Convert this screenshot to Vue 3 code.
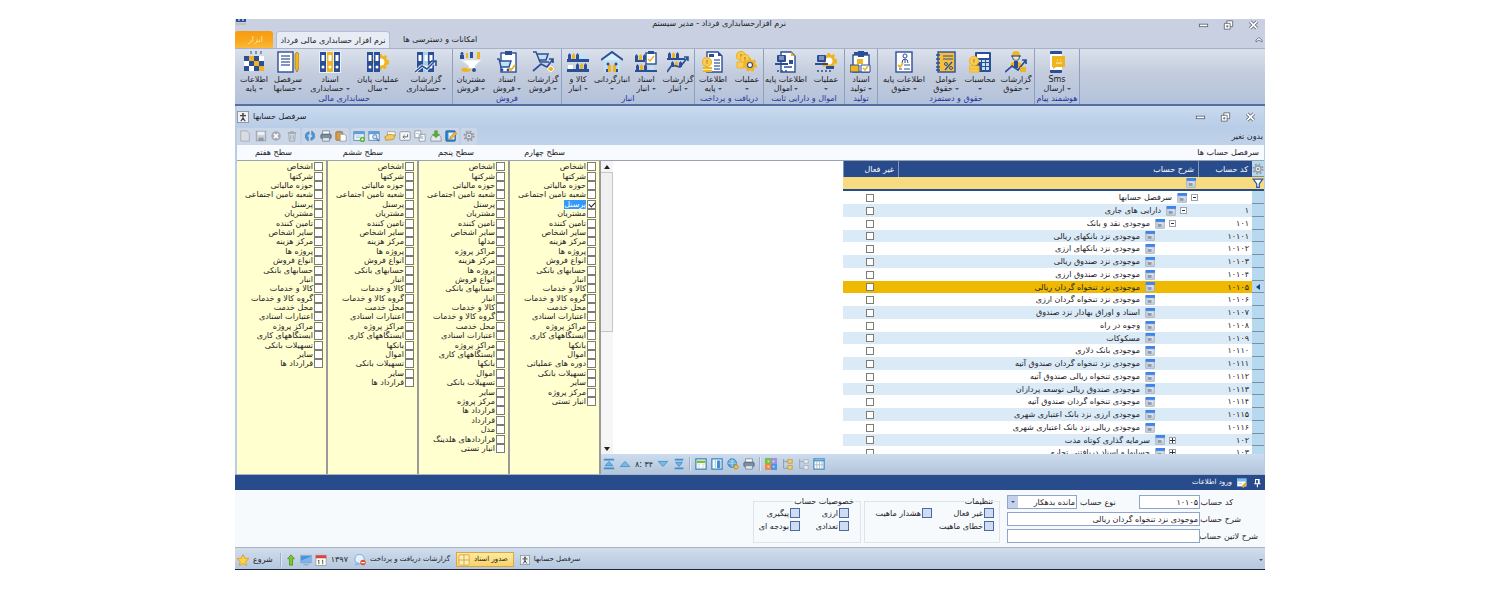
<script setup>
import { ref } from 'vue'

const B = '#2b4f96'
const Y = '#f0b41e'
const L = '#bfe0f5'

const gear = (x, y, r, fill, hole) =>
  `<circle cx="${x}" cy="${y}" r="${r}" fill="${hole}" stroke="${fill}" stroke-width="3"/><circle cx="${x}" cy="${y}" r="${r + 2}" fill="none" stroke="${fill}" stroke-width="2" stroke-dasharray="2.6 2.6"/>`
const coin = (x, y) =>
  `<ellipse cx="${x}" cy="${y}" rx="4.5" ry="4.5" fill="#f6cd5c" stroke="${Y}" stroke-width="1.2"/><path d="M${x} ${y - 2}v4M${x - 1} ${y - 1}h2" stroke="#c98a10" stroke-width="1"/>`
const binder = (x, c, w = 6) =>
  `<rect x="${x}" y="1" width="${w}" height="20" fill="${c}"/><rect x="${x + 1.5}" y="4" width="${w - 3}" height="6" fill="#fff"/><circle cx="${x + w / 2}" cy="16" r="1.5" fill="#fff"/>`
const bottles = (x, y) =>
  `<path d="M${x} ${y}v-4l1.5-2 1.5 2v4z" fill="${B}"/><path d="M${x + 4} ${y}v-4l1.5-2 1.5 2v4z" fill="${Y}"/><path d="M${x + 8} ${y}v-4l1.5-2 1.5 2v4z" fill="${B}"/>`
const sheet = (x, y, w, h) =>
  `<rect x="${x}" y="${y}" width="${w}" height="${h}" fill="#fff" stroke="${B}" stroke-width="1.4"/>`
const lines = (x, y, w, n) =>
  Array.from({ length: n }, (_, i) => `<path d="M${x} ${y + i * 3}h${w}" stroke="${B}" stroke-width="1.2"/>`).join('')
const cart = (x, y) =>
  `<path d="M${x} ${y}h2l2 8h8l2-6h-11" fill="${L}" stroke="${B}" stroke-width="1.4"/><circle cx="${x + 5}" cy="${y + 11}" r="1.4" fill="${B}"/><circle cx="${x + 11}" cy="${y + 11}" r="1.4" fill="${B}"/>`

const art = {
  blocks: `<path d="M1 5h5v5h-5zM6 10h5v5h-5zM1 15h5v5h-5zM11 15h5v5h-5zM16 10h5v5h-5zM11 5h5v5h-5z" fill="${B}"/><path d="M6 5h5v5h-5zM11 10h5v5h-5zM16 15h5v5h-5z" fill="${Y}"/><path d="M6 15h5v5h-5zM16 5h5v5h-5zM1 10h5v5h-5z" fill="#fff"/><path d="M8 0v3M13 0v3M18 0v3" stroke="${B}"/>`,
  note: sheet(1, 1, 15, 20) + lines(4, 5, 9, 4) + `<path d="M18 3l2-2 2 2v14l-2 4-2-4z" fill="${Y}" stroke="#8a6a20" stroke-width=".6"/>`,
  binders: `<rect x="0" y="0" width="22" height="22" fill="#e8f2fb"/>` + binder(1, B) + binder(8, Y) + binder(15, B),
  bindersGear: gear(14, 11, 5, Y, '#fff') + binder(0, B) + binder(7, B),
  bindersChart: binder(2, B) + binder(8, '#a9cdec') + binder(13, B) + `<path d="M0 21l7-6 5 3 8-8" fill="none" stroke="#fff" stroke-width="3"/><path d="M0 21l7-6 5 3 8-8M16 10h5v5" fill="none" stroke="${B}" stroke-width="1.6"/>`,
  funnel: `<path d="M1 9h20l-6 6v5l-6-2v-3z" fill="#fff" stroke="#dce6f0"/><path d="M0 8v-4h4v4zM10 7v-6h3v6z" fill="${B}"/><path d="M6 7v-5h2v5zM17 8v-7h3v7z" fill="${Y}"/><circle cx="2" cy="2.500" r="1.500" fill="${B}"/><path d="M1 18q4-3 7 0l4-1q-1 4-6 4t-5-3z" fill="${Y}"/><circle cx="14" cy="19" r="2" fill="${B}"/>`,
  clipCart: sheet(5, 2, 15, 19) + `<rect x="9" y="0" width="7" height="4" fill="${B}"/>` + cart(1, 8) + `<path d="M13 17l2 2 4-5" stroke="${Y}" stroke-width="2" fill="none"/>`,
  cartChart: `<path d="M1 1h3l4 10h9M5 3h11l-2 6h-7" fill="${L}" stroke="${B}" stroke-width="1.500"/><path d="M1 20l8-7 6 3 6-8M17 8h4v4" fill="none" stroke="${B}" stroke-width="1.700"/><path d="M15 18l4-3 3 3-3 3z" fill="${Y}" stroke="#fff"/>`,
  shelf: bottles(1, 8) + `<path d="M0 8h22v3h-22zM0 18h22v3h-22z" fill="${B}"/><path d="M13 3h7v5h-7z" fill="${L}"/><path d="M1 14h5v4h-5z" fill="#fff"/>` + bottles(9, 18),
  warehouse: `<path d="M3 8v13h3v-10h10v10h3v-13z" fill="${L}"/><path d="M0 9l11-8 11 8" fill="#d8effa" stroke="${B}" stroke-width="2"/><path d="M7 14h3v7h-3zM12 14h3v7h-3z" fill="${Y}"/><circle cx="7" cy="13" r="1.500" fill="${B}"/><circle cx="15" cy="13" r="1.500" fill="${B}"/><path d="M5 21v-3h2v3zM15 21v-3h2v3z" fill="${B}"/>`,
  shelfClip: sheet(11, 2, 10, 11) + `<rect x="13" y="0" width="6" height="3" fill="${B}"/><path d="M13 8l2 2 4-5" stroke="${Y}" stroke-width="1.500" fill="none"/>` + bottles(0, 9) + `<path d="M0 9h10v2h-10zM0 19h22v2h-22z" fill="${B}"/>` + bottles(1, 19) + `<path d="M14 15h5v4h-5z" fill="${L}"/>`,
  shelfChart: bottles(1, 7) + `<path d="M0 7h18v2h-18z" fill="${B}"/>` + bottles(4, 16) + `<path d="M0 21l5-7 8 2 8-10M17 6h4v4" fill="none" stroke="${B}" stroke-width="1.600"/>`,
  coinsPaper: `<path d="M5 1h11l4 4v16h-15z" fill="#fff" stroke="${B}" stroke-width="1.400"/><path d="M16 1v4h4z" fill="${B}"/><rect x="7" y="3" width="5" height="3" fill="${B}"/>` + lines(12, 9, 6, 4) + coin(5, 11) + `<path d="M1 16h9v5h-9z" fill="${Y}"/><path d="M1 18.500h9" stroke="#fff3c0"/>`,
  coinsGear: coin(5, 5) + coin(9, 8) + `<path d="M1 11h7v6h-7z" fill="#f6cd5c" stroke="${Y}"/>` + gear(14, 14, 4, Y, '#fff') + `<circle cx="14" cy="14" r="2.500" fill="#fff" stroke="${B}" stroke-width="1.200"/>`,
  assetPaper: `<path d="M6 1h10l4 4v16h-14z" fill="#fff" stroke="${B}" stroke-width="1.400"/><path d="M16 1v4h4z" fill="${Y}"/>` + `<rect x="2" y="4" width="9" height="7" rx="1" fill="${B}"/><path d="M0 12h13v2h-13z" fill="${B}"/><rect x="14" y="9" width="4" height="4" fill="${B}"/><path d="M2 20h2M6 20h2M10 20h2M9 16h8" stroke="${B}" stroke-width="1.500"/><path d="M4 6h5M4 8h5" stroke="#fff" stroke-width=".8"/>`,
  assetGear: gear(14, 10, 5, Y, '#fff') + `<rect x="2" y="4" width="9" height="7" rx="1" fill="${B}"/><path d="M0 12h13v2h-13z" fill="${B}"/><path d="M4 6h5M4 8h5" stroke="#fff" stroke-width=".8"/><rect x="11" y="15" width="8" height="3" fill="${B}"/><path d="M2 20h2M6 20h2M10 20h2M14 20h2" stroke="${B}" stroke-width="1.500"/>`,
  production: sheet(3, 4, 16, 17) + `<rect x="4" y="1" width="14" height="3" fill="${B}"/><rect x="8" y="0" width="6" height="6" fill="${B}"/><rect x="7" y="8" width="6" height="5" fill="${Y}"/><path d="M0 14h9v7h-9z" fill="${Y}" stroke="${B}"/><path d="M11 14h9v7h-9z" fill="#fff" stroke="${B}"/><path d="M13 17l2 2 3-4" stroke="${Y}" stroke-width="1.500" fill="none"/>`,
  personPaper: sheet(3, 1, 16, 20) + `<circle cx="12" cy="5" r="2" fill="#fff" stroke="${B}"/><path d="M9 12q0-4 3-4t3 4M12 8v4" fill="none" stroke="${B}"/><path d="M5 14l2 2 3-4" fill="none" stroke="${Y}" stroke-width="1.800"/><path d="M11 14h6M11 18h6M6 18h3" stroke="${B}"/>`,
  percentBook: `<rect x="3" y="1" width="17" height="20" fill="#f5bf3c" stroke="${B}" stroke-width="1.400"/><path d="M1 4h4M1 8h4M1 12h4M1 16h4M1 19h4" stroke="${B}" stroke-width="1.500"/><path d="M8 5h10M8 8h10" stroke="${B}"/><path d="M10 19l7-8" stroke="${B}" stroke-width="1.400"/><circle cx="11" cy="13" r="1.500" fill="none" stroke="${B}"/><circle cx="16" cy="17" r="1.500" fill="none" stroke="${B}"/>`,
  calculator: `<rect x="6" y="1" width="16" height="20" rx="1" fill="${B}"/><rect x="8" y="3" width="12" height="4" fill="#fff"/><path d="M9 9h3v2h-3zM13 9h3v2h-3zM17 9h3v2h-3zM13 12h3v3h-3zM17 12h3v3h-3zM13 16h3v3h-3zM17 16h3v3h-3z" fill="${L}"/>` + coin(5, 10) + `<path d="M0 15h10v6h-10z" fill="#f6cd5c" stroke="${Y}"/><path d="M0 18h10" stroke="${Y}"/>`,
  worker: `<circle cx="11" cy="6" r="3.500" fill="#fbe3b8" stroke="${B}"/><path d="M7 5q0-5 4-5t4 5z" fill="${Y}"/><path d="M6 5h10" stroke="${B}" stroke-width="1.200"/><path d="M5 17v-4q1-3 6-3t6 3v4z" fill="${Y}" stroke="#fff" stroke-width=".5"/><path d="M9 10h4v7h-4z" fill="${B}"/><path d="M0 21l7-6 6 4 8-10M17 9h4v4" fill="none" stroke="${B}" stroke-width="1.700"/><path d="M15 16h6v5h-6z" fill="${Y}"/>`,
  sms: `<rect x="4" y="0" width="12" height="22" rx="1" fill="${B}"/><rect x="4" y="3" width="12" height="16" fill="#fff"/><path d="M6 5h13v11h-9l-3 2v-2h-1z" fill="${Y}"/><path d="M10 12h6M11 9h1M14 9h1" stroke="#fff2c0" stroke-width="1.200"/>`
}

const groups = [
  { name: 'حسابداری مالی', items: [
    { icon: 'blocks', a: 'اطلاعات', b: 'پایه', w: 'w-m' },
    { icon: 'note', a: 'سرفصل', b: 'حسابها', w: 'w-s' },
    { icon: 'binders', a: 'اسناد', b: 'حسابداری', w: 'w-xl' },
    { icon: 'bindersGear', a: 'عملیات پایان', b: 'سال', w: 'w-l' },
    { icon: 'bindersChart', a: 'گزارشات', b: 'حسابداری', w: 'w-xl' }
  ] },
  { name: 'فروش', items: [
    { icon: 'funnel', a: 'مشتریان', b: 'فروش', w: 'w-m' },
    { icon: 'clipCart', a: 'اسناد', b: 'فروش', w: 'w-m' },
    { icon: 'cartChart', a: 'گزارشات', b: 'فروش', w: 'w-m' }
  ] },
  { name: 'انبار', items: [
    { icon: 'shelf', a: 'کالا و', b: 'انبار', w: 'w-s' },
    { icon: 'warehouse', a: 'انبارگردانی', b: '', w: 'w-m' },
    { icon: 'shelfClip', a: 'اسناد', b: 'انبار', w: 'w-s' },
    { icon: 'shelfChart', a: 'گزارشات', b: 'انبار', w: 'w-s' }
  ] },
  { name: 'دریافت و پرداخت', items: [
    { icon: 'coinsPaper', a: 'اطلاعات', b: 'پایه', w: 'w-m' },
    { icon: 'coinsGear', a: 'عملیات', b: '', w: 'w-s' }
  ] },
  { name: 'اموال و دارایی ثابت', items: [
    { icon: 'assetPaper', a: 'اطلاعات پایه', b: 'اموال', w: 'w-l' },
    { icon: 'assetGear', a: 'عملیات', b: '', w: 'w-m' }
  ] },
  { name: 'تولید', items: [{ icon: 'production', a: 'اسناد', b: 'تولید', w: 'w-s' }] },
  { name: 'حقوق و دستمزد', items: [
    { icon: 'personPaper', a: 'اطلاعات پایه', b: 'حقوق', w: 'w-xl' },
    { icon: 'percentBook', a: 'عوامل', b: 'حقوق', w: 'w-s' },
    { icon: 'calculator', a: 'محاسبات', b: '', w: 'w-m' },
    { icon: 'worker', a: 'گزارشات', b: 'حقوق', w: 'w-m' }
  ] },
  { name: 'هوشمند پیام', items: [{ icon: 'sms', a: 'Sms', b: 'ارسال', w: 'w-l' }] }
]

const small = {
  page: '<path d="M2 1h7l3 3v9H2z" fill="#d9dde2" stroke="#a3abb5"/>',
  save: '<rect x="1.500" y="1.500" width="11" height="11" fill="#c9ced5" stroke="#959da8"/><path d="M3 2h8v4H3z" fill="#eef0f3"/><path d="M4 9h6v4H4z" fill="#8f98a4"/>',
  cancel: '<circle cx="7" cy="7" r="5.500" fill="#a3a9b2"/><path d="M4.500 4.500l5 5M9.500 4.500l-5 5" stroke="#fff" stroke-width="1.800"/>',
  trash: '<path d="M3 4h8l-1 9H4zM2 3h10M5 2h4" fill="#d3d8df" stroke="#9aa2ad"/><path d="M5.500 6v5M8.500 6v5" stroke="#9aa2ad"/>',
  refresh: '<path d="M6 2Q0 3 2 10L5 13V8L4 9Q3 5 6 5z" fill="#4a9ad4" stroke="#2a74b4" stroke-width=".6"/><path d="M8 12Q14 11 12 4L9 1V6L10 5Q11 9 8 9z" fill="#4a9ad4" stroke="#2a74b4" stroke-width=".6"/>',
  print: '<path d="M3 1h8v4H3z" fill="#fff" stroke="#7c8795"/><rect x="1" y="5" width="12" height="5" rx="1" fill="#7d8ea2" stroke="#566473"/><path d="M3 9h8v4H3z" fill="#dfeaf5" stroke="#7c8795"/>',
  paste: '<rect x="1" y="2" width="8" height="10" rx="1" fill="#d99b45" stroke="#a87024"/><rect x="3" y="1" width="4" height="2" fill="#8a8f98"/><path d="M6 5h5l2 2v6H6z" fill="#fff" stroke="#8f99a5"/>',
  addForm: '<rect x="1" y="2" width="12" height="10" fill="#fff" stroke="#4c7fb5"/><path d="M1 2h12v3H1z" fill="#5fa0dc"/><path d="M3 7h7M3 9h5" stroke="#8fb4d8"/><circle cx="11" cy="11" r="3" fill="#5cb531"/><path d="M9.500 11h3M11 9.500v3" stroke="#fff"/>',
  findForm: '<rect x="1" y="2" width="12" height="10" fill="#fff" stroke="#4c7fb5"/><path d="M1 2h12v3H1z" fill="#5fa0dc"/><circle cx="8" cy="8" r="2.500" fill="#d5eafc" stroke="#3e6fa8"/><path d="M10 10l3 3" stroke="#3e6fa8" stroke-width="1.500"/>',
  openFile: '<path d="M4 2h9v5H4z" fill="#fff" stroke="#9b9b9b"/><path d="M1 8l5-3 7 1-2 5-9 1z" fill="#f2cb63" stroke="#bd9330"/>',
  enter: '<rect x="1" y="2" width="12" height="10" rx="1" fill="#f3f5f8" stroke="#8a94a0"/><path d="M10 5v3H5M6.500 6L4.500 8l2 2" fill="none" stroke="#4f5a68"/>',
  copy: '<path d="M1 1h7v8H1zM6 5h7v8H6z" fill="#fff" stroke="#8a94a0"/><path d="M2.500 4h3M8 8h3M8 10h3" stroke="#8fb0d4"/>',
  download: '<path d="M1 9l2-3h8l2 3v4H1z" fill="#e3e6ea" stroke="#8a94a0"/><path d="M5.500 1h3v4H11L7 9 3 5h2.500z" fill="#55b22c" stroke="#3a8a1a" stroke-width=".6"/>',
  editBook: '<rect x="1" y="1" width="11" height="12" rx="1" fill="#2f86d0" stroke="#1d5f9c"/><path d="M4 3h7v8H4z" fill="#e9f3fc"/><path d="M5 11l1-3 6-6 2 2-6 6z" fill="#f0b63a" stroke="#a8761a" stroke-width=".6"/>',
  gear: '<circle cx="7" cy="7" r="3.500" fill="#eceef0" stroke="#9299a2" stroke-width="1.500"/><circle cx="7" cy="7" r="5.500" fill="none" stroke="#9299a2" stroke-width="2" stroke-dasharray="2.160 2.160"/><circle cx="7" cy="7" r="1.500" fill="#9299a2"/>',
  person: '<rect x=".5" y=".5" width="13" height="13" fill="#f0f1f3" stroke="#8b8f96"/><circle cx="7" cy="3.500" r="1.300" fill="#44474c"/><path d="M3.500 5.500h7M7 5v4M7 8l-2.500 4M7 8l2.500 4" stroke="#44474c" stroke-width="1.400" fill="none"/>',
  last: '<path d="M1 2h12M1 12h12" stroke="#3f8fc9" stroke-width="2"/><path d="M7 4l4.500 5h-9z" fill="#6db3e2" stroke="#3f8fc9"/>',
  prev: '<path d="M7 4l5.500 6h-11z" fill="#79b9e4" stroke="#4492ca"/>',
  next: '<path d="M7 10L1.500 4h11z" fill="#79b9e4" stroke="#4492ca"/>',
  first: '<path d="M2 2h10M2 12h10" stroke="#3f8fc9" stroke-width="2"/><path d="M7 10L3 5h8z" fill="#6db3e2" stroke="#3f8fc9"/>',
  gridGreen: '<rect x="1" y="1" width="12" height="12" fill="#fff" stroke="#3f87bd" stroke-width="1.500"/><path d="M2 3h10v3H2z" fill="#7dbb45"/><path d="M3 8h3M8 8h3M3 10.500h3M8 10.500h3" stroke="#b5c4d3"/>',
  columns: '<rect x="1" y="1" width="12" height="12" fill="#fff" stroke="#3f87bd" stroke-width="1.500"/><path d="M5 2v10M9 2v10" stroke="#9db8d0"/><path d="M7 3h4v9H7z" fill="#3f91d4"/>',
  globe: '<circle cx="6" cy="6" r="5" fill="#59a6dc" stroke="#2d77ae"/><path d="M1 6h10M6 1v10M2.500 3q3.500 2 7 0" stroke="#d5ebf9" fill="none" stroke-width=".8"/><circle cx="10.500" cy="10.500" r="2.500" fill="#f1c04d" stroke="#b88822"/>',
  tiles: '<rect x="0" y="0" width="7" height="7" fill="#7fbf3f"/><rect x="7" y="0" width="7" height="7" fill="#a38fe0"/><rect x="0" y="7" width="7" height="7" fill="#f08a4a"/><rect x="7" y="7" width="7" height="7" fill="#4e94e0"/><path d="M3 3h2v2H3zM9 3h2v2H9zM3 9h2v2H3zM9 9h2v2H9z" fill="#fff" opacity=".7"/>',
  tree: '<path d="M3 1v11h5M3 4h5" fill="none" stroke="#8b94a0"/><rect x="8" y="2" width="5" height="4" fill="#f2d27a" stroke="#bf9a3a"/><rect x="8" y="9" width="5" height="4" fill="#f2d27a" stroke="#bf9a3a"/>',
  treeOff: '<path d="M3 1v11h5M3 4h5" fill="none" stroke="#9aa3ae"/><rect x="8" y="2" width="5" height="4" fill="#eceff3" stroke="#a9b1bb"/><rect x="8" y="9" width="5" height="4" fill="#eceff3" stroke="#a9b1bb"/>',
  table: '<rect x="1" y="1" width="12" height="12" fill="#fff" stroke="#4d8fc2" stroke-width="1.500"/><path d="M1 2h12v2H1z" fill="#4d9bd8"/><path d="M4.500 4v9M7.500 4v9M10.500 4v9M1 8h12" stroke="#a6b4c2"/>',
  doc: '<rect x="1" y="1" width="12" height="12" fill="#c6cfda" stroke="#9eabba"/><path d="M1 0h13v4H1z" fill="#3f84ea"/><path d="M4 7h5v4H4z" fill="#8f9cad"/><path d="M5 6h6v3" fill="none" stroke="#eef2f6"/>',
  funnelSmall: '<path d="M1.500 2.500h11L8.500 8v4h-3V8z" fill="#fff" stroke="#2c5ba2" stroke-width="1.500"/>',
  form: '<rect x="0" y="1" width="13" height="11" fill="#fff" stroke="#5d94c7"/><path d="M0 1h13v4H0z" fill="#79c0ee"/><path d="M2 8h5" stroke="#9ab"/><path d="M6 12l6-6 2 2-5 6z" fill="#f0a02e"/>',
  pin: '<path d="M5 2h5v6H5zM3 8h9M7.500 8v5M9 2v6" fill="none" stroke="#fff" stroke-width="1.500"/>',
  star: '<path d="M7 .5l2 4.500 4.800.5-3.600 3.200 1 4.800L7 11l-4.200 2.500 1-4.800L.2 5.500 5 5z" fill="#ffd447" stroke="#e09b1d"/>',
  up: '<path d="M7 1l4 4.500H8.800V13H5.200V5.500H3z" fill="#7cc62f" stroke="#4d9a15"/>',
  monitor: '<rect x=".5" y="1.500" width="13" height="9" fill="#4b93dd" stroke="#9fb4c9"/><path d="M1 8l12-5v7H1z" fill="#7ab6ee"/><path d="M4 12.500h6" stroke="#9aa6b3" stroke-width="1.500"/>',
  calendar: '<rect x="1" y="1.500" width="12" height="12" fill="#fff" stroke="#9a9fa6"/><path d="M1 1.500h12V5H1z" fill="#d9443c"/><path d="M4.500 7v5M9 7v5M3.500 8l1-1M8 8l1-1" stroke="#444"/>',
  chat: '<circle cx="6.500" cy="6" r="5.500" fill="#e4f2fd" stroke="#6aa4da"/><path d="M3 10l-1 3 4-2z" fill="#e4f2fd" stroke="#6aa4da"/><circle cx="10.500" cy="10" r="3.200" fill="#e2512f"/><path d="M8.500 10h4" stroke="#fff" stroke-width="1.400"/>',
  orgGrid: '<rect x="0" y="0" width="14" height="14" fill="#fff0bd"/><path d="M1 1h12v12H1zM7 1v12M1 7h12" fill="none" stroke="#d29b28"/><path d="M4 7v0M10 7v0" stroke="#d29b28" stroke-width="2"/>'
}

const tools = [
  { cls: 'tg-a', icons: [['page', 'جدید'], ['save', 'ذخیره'], ['cancel', 'انصراف'], ['trash', 'حذف']] },
  { cls: 'tg-b', icons: [['refresh', 'بازخوانی'], ['print', 'چاپ'], ['paste', 'چسباندن']] },
  { cls: 'tg-c', icons: [['addForm', 'افزودن'], ['findForm', 'جستجو'], ['openFile', 'باز کردن'], ['enter', 'ورود'], ['copy', 'کپی'], ['download', 'دریافت'], ['editBook', 'ویرایش']] },
  { cls: 'tg-d', icons: [['gear', 'تنظیمات']] }
]

const head = ['اشخاص', 'شرکتها', 'حوزه مالیاتی', 'شعبه تامین اجتماعی', 'پرسنل', 'مشتریان', 'تامین کننده', 'سایر اشخاص']
const mid = ['مرکز هزینه', 'پروژه ها', 'انواع فروش', 'حسابهای بانکی', 'انبار', 'کالا و خدمات', 'گروه کالا و خدمات', 'محل خدمت', 'اعتبارات اسنادی', 'مراکز پروژه', 'ایستگاههای کاری']
const build = (key, names) => names.map((name, i) => ({ id: key + i, name, on: false }))
const levels = ref([
  { name: 'سطح هفتم', items: build('g', [...head, ...mid, 'تسهیلات بانکی', 'سایر', 'قرارداد ها']) },
  { name: 'سطح ششم', items: build('f', [...head, ...mid, 'بانکها', 'اموال', 'تسهیلات بانکی', 'سایر', 'قرارداد ها']) },
  { name: 'سطح پنجم', items: build('e', [...head, 'مدلها', 'مراکز پروژه', ...mid, 'بانکها', 'اموال', 'تسهیلات بانکی', 'سایر', 'مرکز پروژه', 'قرارداد ها', 'قرارداد', 'مدل', 'قراردادهای هلدینگ', 'انبار تستی']) },
  { name: 'سطح چهارم', items: build('d', [...head, ...mid, 'بانکها', 'اموال', 'دوره های عملیاتی', 'تسهیلات بانکی', 'سایر', 'مرکز پروژه', 'انبار تستی']) }
])
levels.value[3].items[4].on = true

const rows = ref([
  ['', 'سرفصل حسابها', 0, '−'],
  ['۱', 'دارایی های جاری', 1, '−'],
  ['۱۰۱', 'موجودی نقد و بانک', 2, '−'],
  ['۱۰۱۰۱', 'موجودی نزد بانکهای ریالی', 3],
  ['۱۰۱۰۲', 'موجودی نزد بانکهای ارزی', 3],
  ['۱۰۱۰۳', 'موجودی نزد صندوق ریالی', 3],
  ['۱۰۱۰۴', 'موجودی نزد صندوق ارزی', 3],
  ['۱۰۱۰۵', 'موجودی نزد تنخواه گردان ریالی', 3],
  ['۱۰۱۰۶', 'موجودی نزد تنخواه گردان ارزی', 3],
  ['۱۰۱۰۷', 'اسناد و اوراق بهادار نزد صندوق', 3],
  ['۱۰۱۰۸', 'وجوه در راه', 3],
  ['۱۰۱۰۹', 'مسکوکات', 3],
  ['۱۰۱۱۰', 'موجودی بانک دلاری', 3],
  ['۱۰۱۱۱', 'موجودی نزد تنخواه گردان صندوق آتیه', 3],
  ['۱۰۱۱۲', 'موجودی تنخواه ریالی صندوق آتیه', 3],
  ['۱۰۱۱۳', 'موجودی صندوق ریالی توسعه پردازان', 3],
  ['۱۰۱۱۴', 'موجودی تنخواه گردان صندوق آتیه', 3],
  ['۱۰۱۱۵', 'موجودی ارزی نزد بانک اعتباری شهری', 3],
  ['۱۰۱۱۶', 'موجودی ریالی نزد بانک اعتباری شهری', 3],
  ['۱۰۲', 'سرمایه گذاری کوتاه مدت', 2, '+'],
  ['۱۰۳', 'حسابها و اسناد دریافتنی تجاری', 2, '+']
].map(([code, name, depth, sign]) => ({ code, name, depth, sign, off: false })))
const selected = ref(7)

const code = ref('۱۰۱۰۵')
const title = ref('موجودی نزد تنخواه گردان ریالی')
const latin = ref('')
const kind = ref('مانده بدهکار')
const settings = ['غیر فعال', 'هشدار ماهیت', 'خطای ماهیت']
const traits = ['ارزی', 'پیگیری', 'تعدادی', 'بودجه ای']
</script>

<template>
  <div class="desk">
    <main class="window">
      <header class="caption">
        <svg class="app-mark" viewBox="0 0 12 6"><path d="M1 0h10v3H1z" fill="#2b4f96" /><path d="M3 1h2M7 1h2" stroke="#fff" /><path d="M1 5h10" stroke="#c9a98a" /></svg>
        <h1 dir="rtl">نرم افزارحسابداری فرداد - مدیر سیستم</h1>
        <div class="controls">
          <button aria-label="کوچک کردن"><svg viewBox="0 0 12 12"><rect x="1" y="5" width="10" height="3" fill="#fff" stroke="#5b6270" /></svg></button>
          <button aria-label="بازگرداندن"><svg viewBox="0 0 12 12"><path d="M4 1h7v7H4z" fill="#fff" stroke="#5b6270" /><path d="M1 4h7v7H1z" fill="#fff" stroke="#5b6270" /><path d="M3 7.500h3M4.500 6v3" stroke="#5b6270" /></svg></button>
          <button aria-label="بستن"><svg viewBox="0 0 12 12"><path d="M2 2l8 8M10 2l-8 8" stroke="#5b6270" stroke-width="4" /><path d="M2 2l8 8M10 2l-8 8" stroke="#fff" stroke-width="2" /></svg></button>
        </div>
      </header>

      <nav class="tabs">
        <button class="tab tab-tools">ابزار</button>
        <button class="tab tab-on">نرم افزار حسابداری مالی فرداد</button>
        <button class="tab">امکانات و دسترسی ها</button>
        <button class="collapse" aria-label="جمع کردن نوار"><svg viewBox="0 0 8 6"><path d="M1 5V3l3-2.500L7 3v2L4 3z" fill="#fff" stroke="#5b6270" stroke-width=".8" /></svg></button>
      </nav>

      <section class="ribbon">
        <div v-for="g in groups" :key="g.name" class="group">
          <div class="group-items">
            <button v-for="it in g.items" :key="it.icon" class="big" :class="it.w">
              <svg viewBox="0 0 22 22" v-html="art[it.icon]"></svg>
              <span>{{ it.a }}</span>
              <span class="second"><span v-if="it.b">{{ it.b }}</span><i class="caret"></i></span>
            </button>
          </div>
          <h2>{{ g.name }}</h2>
        </div>
      </section>

      <section class="child">
        <header class="child-cap">
          <svg class="s12" viewBox="0 0 14 14" v-html="small.person"></svg>
          <h2>سرفصل حسابها</h2>
          <div class="controls">
            <button aria-label="کوچک کردن"><svg viewBox="0 0 12 12"><rect x="1" y="5" width="10" height="3" fill="#fff" stroke="#5b6270" /></svg></button>
            <button aria-label="بازگرداندن"><svg viewBox="0 0 12 12"><path d="M4 1h7v7H4z" fill="#fff" stroke="#5b6270" /><path d="M1 4h7v7H1z" fill="#fff" stroke="#5b6270" /><path d="M3 7.500h3M4.500 6v3" stroke="#5b6270" /></svg></button>
            <button aria-label="بستن"><svg viewBox="0 0 12 12"><path d="M2 2l8 8M10 2l-8 8" stroke="#5b6270" stroke-width="4" /><path d="M2 2l8 8M10 2l-8 8" stroke="#fff" stroke-width="2" /></svg></button>
          </div>
        </header>

        <div class="toolbar">
          <div v-for="t in tools" :key="t.cls" class="tool-group" :class="t.cls">
            <button v-for="[name, label] in t.icons" :key="name" :aria-label="label"><svg class="s12" viewBox="0 0 14 14" v-html="small[name]"></svg></button>
          </div>
          <span class="state">بدون تغیر</span>
        </div>

        <div class="level-heads">
          <h3 v-for="l in levels" :key="l.name" class="level-head">{{ l.name }}</h3>
          <h3 class="accounts-head">سرفصل حساب ها</h3>
        </div>

        <div class="body">
          <ul v-for="l in levels" :key="l.name" class="level" dir="rtl">
            <li v-for="it in l.items" :key="it.id">
              <label :class="{ picked: it.on }"><input v-model="it.on" type="checkbox" class="box"><span>{{ it.name }}</span></label>
            </li>
          </ul>

          <div class="side">
            <div class="grid-area">
              <div class="scroll">
                <button aria-label="بالا"><svg viewBox="0 0 6 4"><path d="M3 0l3 4H0z" fill="#222" /></svg></button>
                <span class="thumb"></span>
                <span class="track"></span>
                <button aria-label="پایین"><svg viewBox="0 0 6 4"><path d="M3 4L0 0h6z" fill="#222" /></svg></button>
              </div>
              <div class="table-clip">
                <table dir="rtl">
                  <colgroup><col class="c-mark"><col class="c-code"><col><col class="c-off"></colgroup>
                  <thead>
                    <tr>
                      <th class="mark"><svg class="s12" viewBox="0 0 14 14" v-html="small.gear"></svg></th>
                      <th>کد حساب</th>
                      <th>شرح حساب</th>
                      <th>غیر فعال</th>
                    </tr>
                    <tr class="filter">
                      <td class="mark"><svg class="s12" viewBox="0 0 14 14" v-html="small.funnelSmall"></svg></td>
                      <td></td>
                      <td class="filter-cell"><svg class="s10" viewBox="0 0 14 14" v-html="small.doc"></svg></td>
                      <td></td>
                    </tr>
                  </thead>
                  <tbody>
                    <tr v-for="(r, i) in rows" :key="r.code" :class="{ chosen: i === selected }" @click="selected = i">
                      <td class="mark"><i v-if="i === selected" class="pointer"></i></td>
                      <td class="code">{{ r.code }}</td>
                      <td>
                        <div class="node" :class="'d' + r.depth">
                          <button v-if="r.sign" class="sign" :aria-label="r.name"><svg viewBox="0 0 5 5"><path :d="r.sign === '+' ? 'M0 2.500h5M2.500 0v5' : 'M1 2.500h3'" stroke="#333" /></svg></button>
                          <svg class="s10" viewBox="0 0 14 14" v-html="small.doc"></svg>
                          <span>{{ r.name }}</span>
                        </div>
                      </td>
                      <td class="off"><input v-model="r.off" type="checkbox" class="box tiny" :aria-label="'غیر فعال ' + r.name"></td>
                    </tr>
                  </tbody>
                </table>
              </div>
            </div>

            <div class="navigator">
              <button aria-label="ابتدا"><svg class="s12" viewBox="0 0 14 14" v-html="small.last"></svg></button>
              <button aria-label="قبلی"><svg class="s12" viewBox="0 0 14 14" v-html="small.prev"></svg></button>
              <output>۸: ۳۴</output>
              <button aria-label="بعدی"><svg class="s12" viewBox="0 0 14 14" v-html="small.next"></svg></button>
              <button aria-label="انتها"><svg class="s12" viewBox="0 0 14 14" v-html="small.first"></svg></button>
              <i class="bar"></i>
              <button v-for="n in ['gridGreen', 'columns', 'globe', 'print']" :key="n" :aria-label="n"><svg class="s12" viewBox="0 0 14 14" v-html="small[n]"></svg></button>
              <i class="bar"></i>
              <button v-for="n in ['tiles', 'tree', 'treeOff', 'table']" :key="n" :aria-label="n"><svg class="s12" viewBox="0 0 14 14" v-html="small[n]"></svg></button>
            </div>
          </div>
        </div>
      </section>

      <section class="entry" dir="rtl">
        <header class="entry-cap">
          <svg class="s10" viewBox="0 0 14 14" v-html="small.pin"></svg>
          <svg class="s10" viewBox="0 0 14 14" v-html="small.form"></svg>
          <h2>ورود اطلاعات</h2>
        </header>
        <form class="form" @submit.prevent>
          <div class="fields">
            <label for="code" class="l1">کد حساب</label>
            <div class="pair">
              <input id="code" v-model="code" type="text">
              <label for="kind">نوع حساب</label>
              <div class="combo">
                <select id="kind" v-model="kind"><option>مانده بدهکار</option><option>مانده بستانکار</option></select>
                <span class="drop"><i class="caret"></i></span>
              </div>
            </div>
            <label for="title" class="l2">شرح حساب</label>
            <input id="title" v-model="title" type="text">
            <label for="latin">شرح لاتین حساب</label>
            <input id="latin" v-model="latin" type="text">
          </div>
          <fieldset class="set-wide">
            <legend>تنظیمات</legend>
            <label v-for="s in settings" :key="s"><input type="checkbox" class="box blue"><span>{{ s }}</span></label>
          </fieldset>
          <fieldset class="set-narrow">
            <legend>خصوصیات حساب</legend>
            <label v-for="s in traits" :key="s"><input type="checkbox" class="box blue"><span>{{ s }}</span></label>
          </fieldset>
        </form>
      </section>

      <footer class="status">
        <button class="start"><svg class="s12" viewBox="0 0 14 14" v-html="small.star"></svg>شروع</button>
        <i class="bar"></i>
        <button aria-label="بالا"><svg class="s12" viewBox="0 0 14 14" v-html="small.up"></svg></button>
        <button aria-label="نمایش"><svg class="s12" viewBox="0 0 14 14" v-html="small.monitor"></svg></button>
        <button><svg class="s12" viewBox="0 0 14 14" v-html="small.calendar"></svg>۱۳۹۷</button>
        <button class="task"><svg class="s12" viewBox="0 0 14 14" v-html="small.chat"></svg>گزارشات دریافت و پرداخت</button>
        <button class="task hot"><svg class="s12" viewBox="0 0 14 14" v-html="small.orgGrid"></svg>صدور اسناد</button>
        <button class="task"><svg class="s10" viewBox="0 0 14 14" v-html="small.person"></svg>سرفصل حسابها</button>
        <i class="more caret"></i>
      </footer>
    </main>
  </div>
</template>

<style>
body {
  margin: 0;
  background: #fff;
}
</style>

<style scoped>
* {
  box-sizing: border-box;
}
.desk {
  padding: 19px 235px 20px;
}
.window,
.window button,
.window input,
.window select {
  font-family: "DejaVu Sans", "Noto Sans", sans-serif;
  font-size: 8px;
  color: #1c2028;
}
.window {
  background: #c9d0e1;
  line-height: 9px;
}
h1,
h2,
h3 {
  margin: 0;
  font-size: 8px;
  font-weight: 400;
}
button {
  padding: 0;
  border: 0;
  background: none;
  line-height: 9px;
  white-space: nowrap;
}
svg {
  display: block;
}
.s12 {
  width: 12px;
  height: 12px;
}
.s10 {
  width: 10px;
  height: 10px;
}
.caret {
  border: 2px solid transparent;
  border-top-color: #4a5160;
  border-bottom-width: 0;
}
.bar {
  width: 1px;
  height: 14px;
  background: #9fb1c9;
  border-right: 1px solid #dde7f3;
  box-sizing: content-box;
}

.caption {
  display: grid;
  grid-template-columns: 80px 1fr 80px;
  height: 12px;
}
.app-mark {
  width: 12px;
  height: 6px;
}
.caption h1 {
  text-align: center;
  padding-right: 62px;
}
.controls {
  display: flex;
  justify-content: flex-end;
  gap: 14px;
  padding-right: 6px;
}
.controls svg {
  width: 11px;
  height: 10px;
}

.tabs {
  display: flex;
  height: 17px;
}
.tab {
  padding: 0 13px;
  border-radius: 3px 3px 0 0;
}
.tab-tools {
  width: 38px;
  margin-right: 3px;
  background: linear-gradient(#f89a12, #f8a91e 60%, #fbb93a);
}
.tab.tab-tools {
  color: #ffe39a;
}
.tab-on {
  width: 114px;
  padding: 0;
  border: 1px solid #b4bfd3;
  border-bottom: 0;
  background: #e8ecf4;
}
.collapse {
  margin-left: auto;
  padding: 0 2px 0;
}
.collapse svg {
  width: 8px;
  height: 6px;
}

.ribbon {
  display: flex;
  height: 58px;
  padding-left: 1px;
  border-top: 1px solid #a7b2c7;
  border-bottom: 2px solid #566f9f;
  background: linear-gradient(#dbe1ec, #c3ccdd 45%, #b3c2db);
}
.group {
  border-right: 1px solid #8fa0be;
  display: flex;
  flex-direction: column;
}
.group-items {
  display: flex;
}
.group h2 {
  text-align: center;
  color: #23309a;
  line-height: 12px;
  white-space: nowrap;
}
.big {
  display: flex;
  flex-direction: column;
  align-items: center;
  height: 44px;
  padding-top: 2px;
  line-height: 9px;
}
.big svg {
  width: 22px;
  height: 22px;
  margin-bottom: 2px;
}
.second {
  display: flex;
  align-items: center;
  gap: 2px;
  height: 9px;
}
.w-s { width: 32px; }
.w-m { width: 36px; }
.w-l { width: 44px; }
.w-xl { width: 52px; }

.child {
  padding: 0 1px 0 2px;
  background: #b9cce5;
}
.child-cap {
  display: flex;
  align-items: center;
  gap: 4px;
  height: 21px;
  background: linear-gradient(#c9daef, #b9cde7);
}
.child-cap .controls {
  margin-left: auto;
  padding-right: 8px;
}
.toolbar {
  display: flex;
  align-items: center;
  gap: 2px;
  height: 18px;
  background: linear-gradient(#b9cde7, #c0d2e9);
}
.tool-group {
  display: flex;
  justify-content: space-between;
  align-items: center;
  height: 17px;
  padding: 0 2px;
  border-radius: 2px;
  background: #cbd7e6;
}
.tg-a { width: 63px; }
.tg-b { width: 47px; }
.tg-c { width: 108px; }
.tg-d { width: 16px; }
.state {
  margin-left: auto;
  padding-right: 1px;
}
.level-heads {
  display: flex;
  align-items: center;
  height: 16px;
  background: #f7fafe;
  border-bottom: 1px solid #9aa3af;
}
.level-head {
  width: 91px;
  padding-right: 36px;
  text-align: right;
}
.accounts-head {
  margin-left: auto;
  padding-right: 5px;
}

.body {
  display: flex;
  height: 313px;
  background: #fff;
}
.level {
  display: grid;
  grid-template-rows: repeat(33, 1fr);
  width: 91px;
  margin: 0;
  padding: 1px 3px 2px 0;
  list-style: none;
  background: #ffffd0;
  border-right: 2px solid #9a9a9a;
}
.level label {
  display: flex;
  align-items: center;
  gap: 1px;
  height: 100%;
  white-space: nowrap;
}
.box {
  appearance: none;
  flex: none;
  width: 9px;
  height: 9px;
  margin: 0;
  border: 1px solid #7d7d74;
  background: #fff;
}
.box:checked::after {
  content: "";
  display: block;
  width: 3px;
  height: 5px;
  margin: 0 auto;
  border: solid #222;
  border-width: 0 1px 1px 0;
  transform: rotate(45deg);
}
.picked span {
  color: #fff;
  background: #3399ff;
}
.side {
  flex: 1;
  display: flex;
  flex-direction: column;
  min-width: 0;
}
.grid-area {
  flex: 1;
  display: flex;
  justify-content: space-between;
  min-height: 0;
}
.scroll {
  display: flex;
  flex-direction: column;
  width: 12px;
  background: #f6f6f6;
}
.scroll button {
  display: grid;
  place-items: center;
  height: 11px;
  background: #f4f4f4;
}
.scroll svg {
  width: 6px;
  height: 4px;
}
.thumb {
  flex: 160;
  border: solid #c6c6c6;
  border-width: 1px 1px 1px 0;
  background: #f0f0f0;
}
.track {
  flex: 112;
}
.table-clip {
  width: 421px;
  overflow: hidden;
}
table {
  width: 100%;
  table-layout: fixed;
  border-collapse: separate;
  border-spacing: 0;
}
.c-mark { width: 12px; }
.c-code { width: 54px; }
.c-off { width: 55px; }
th,
td {
  padding: 0;
  line-height: 9px;
}
th {
  height: 16px;
  padding-right: 4px;
  font-weight: 400;
  text-align: right;
  color: #fff;
  background: #284b8b;
  border-left: 1px solid #7f96c0;
}
tr .mark {
  padding: 0;
  background: #b6d9f0;
  border: 0;
  border-bottom: 1px solid #7b8fa5;
}
.filter td {
  height: 14px;
  background: #f7db80;
  border-bottom: 2px solid #284b8b;
}
.filter-cell svg {
  margin-right: 2px;
}
tbody td {
  height: 13px;
}
tbody tr:nth-child(4n) td {
  height: 12px;
}
tbody tr:nth-child(even) {
  background: #daebf7;
}
tbody tr.chosen {
  background: #efb900;
}
.code {
  padding-right: 3px;
}
.off {
  text-align: center;
}
.off .box {
  display: block;
  width: 8px;
  height: 8px;
  margin: auto 24px auto auto;
}
.pointer {
  display: block;
  width: 4px;
  margin: auto;
  border: 3px solid transparent;
  border-right: 4px solid #1c3f88;
  border-left: 0;
}
.node {
  display: flex;
  align-items: center;
  height: 10px;
  white-space: nowrap;
}
.node > .s10 {
  margin: 0 4px 0 5px;
}
.d0 { padding-right: 0; }
.d1 { padding-right: 11px; }
.d2 { padding-right: 22px; }
.d3 { padding-right: 39px; }
.sign {
  width: 7px;
  height: 7px;
  border: 1px solid #9aa3ae;
  background: #fff;
}
.sign svg {
  width: 5px;
  height: 5px;
}
.navigator {
  display: flex;
  align-items: center;
  gap: 4px;
  height: 20px;
  padding-left: 2px;
  background: linear-gradient(#cddcee, #b3c5dc);
}

.entry-cap {
  display: flex;
  align-items: center;
  gap: 5px;
  height: 16px;
  padding-right: 3px;
  background: #284b8b;
  border-top: 1px solid #a8b4c8;
}
.entry-cap h2 {
  font-size: 7px;
  color: #fff;
}
.form {
  display: flex;
  align-items: flex-start;
  height: 57px;
  padding: 5px 7px 4px;
  background: #f7fafd;
}
.fields {
  display: grid;
  grid-template-columns: 58px 193px;
  grid-auto-rows: 14px;
  row-gap: 3px;
  align-items: center;
}
.fields label {
  white-space: nowrap;
}
.l1 { padding-right: 25px; }
.l2 { padding-right: 17px; }
.fields input {
  width: 100%;
  height: 14px;
  padding: 0 1px;
  border: 1px solid #8fa5cb;
  background: #fff;
}
.pair {
  display: flex;
  justify-content: space-between;
  align-items: center;
}
.pair #code {
  width: 61px;
}
.pair label {
  margin-right: auto;
  padding-left: 3px;
}
.combo {
  display: flex;
  width: 70px;
  height: 14px;
  border: 1px solid #8fa5cb;
  background: #fff;
}
.combo select {
  appearance: none;
  flex: 1;
  min-width: 0;
  padding: 0 1px;
  border: 0;
  background: none;
}
.drop {
  display: grid;
  place-items: center;
  width: 10px;
  background: #c3d2ea;
}
fieldset {
  display: grid;
  align-content: start;
  row-gap: 3px;
  min-width: 0;
  height: 46px;
  margin: 2px 0 0;
  padding: 2px 5px 0;
  border: 1px solid #dfe3ea;
}
legend {
  padding: 0 1px;
  line-height: 9px;
}
fieldset label {
  display: flex;
  align-items: center;
  gap: 1px;
  white-space: nowrap;
}
.set-wide {
  grid-template-columns: 62px 1fr;
  width: 136px;
  margin-left: 3px;
  margin-right: 7px;
}
.set-narrow {
  grid-template-columns: 49px 1fr;
  width: 108px;
  padding-right: 11px;
}
.set-narrow legend {
  margin-right: -6px;
}
.box.blue {
  width: 10px;
  height: 10px;
  border-color: #4a6aa5;
  background: #cfdcf2;
}

.status {
  display: flex;
  align-items: center;
  gap: 3px;
  height: 23px;
  padding: 2px 2px 0;
  border-top: 1px solid #a9b3c0;
  border-bottom: 1px solid #20243a;
  background: linear-gradient(#d0ddec, #b5c8df);
}
.status button {
  display: flex;
  align-items: center;
  gap: 4px;
}
.start {
  margin-right: 4px;
}
.status .task {
  margin-left: 3px;
  font-size: 7px;
}
.status .hot {
  height: 15px;
  padding: 0 5px 0 1px;
  border: 1px solid #d9a640;
  background: linear-gradient(#fdeaa2, #fbd263);
}
.more {
  margin-left: auto;
}
</style>
